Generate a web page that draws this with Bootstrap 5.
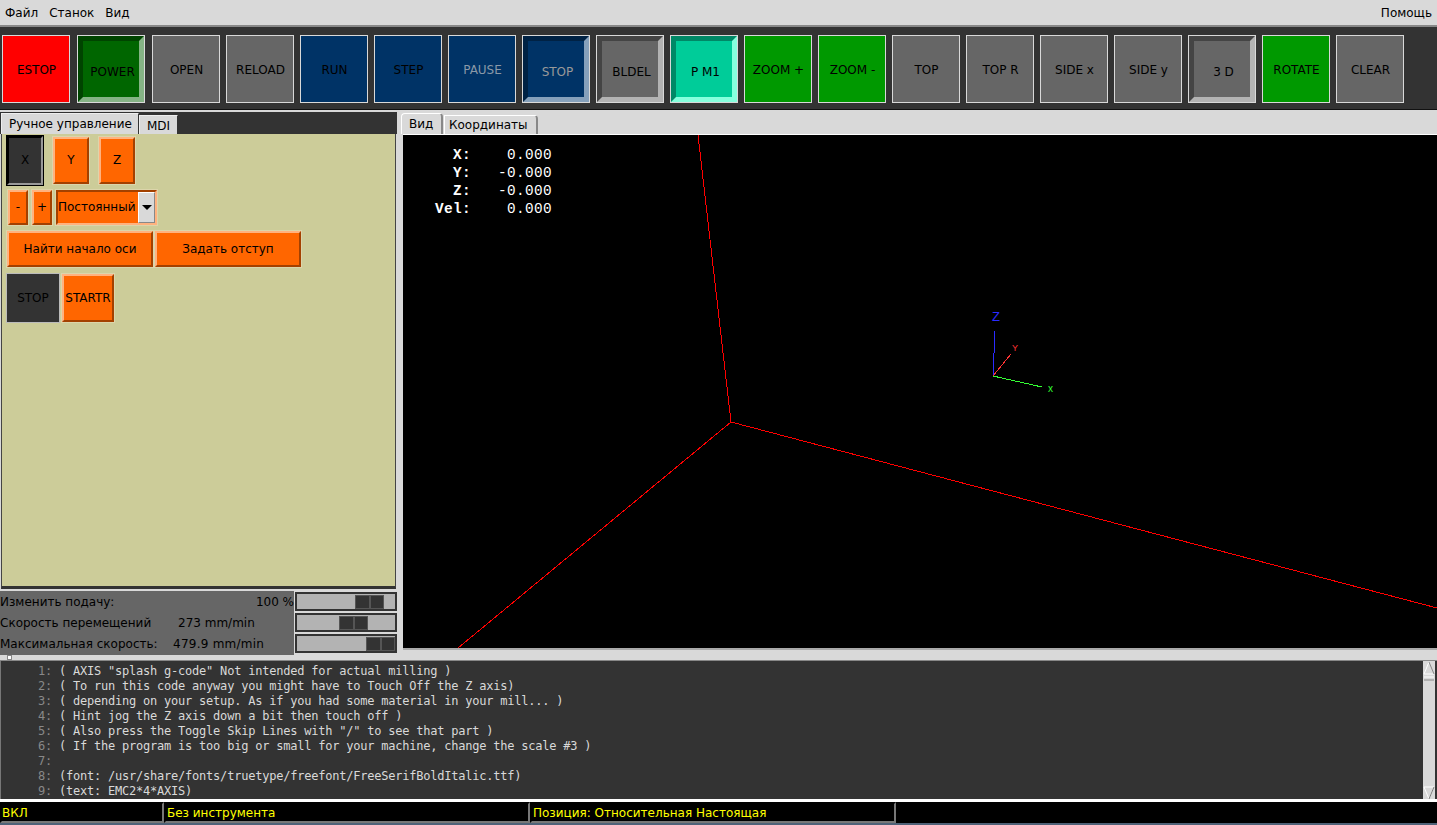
<!DOCTYPE html>
<html lang="ru"><head><meta charset="utf-8"><title>AXIS</title>
<link href="https://cdn.jsdelivr.net/npm/bootstrap@5.3.0/dist/css/bootstrap.min.css" rel="stylesheet">
<script src="https://cdn.jsdelivr.net/npm/bootstrap@5.3.0/dist/js/bootstrap.bundle.min.js"></script>
<style>
html,body{height:825px;overflow:hidden}
body{font-family:"DejaVu Sans",sans-serif;font-size:12px;line-height:15px;color:#000;background:#d9d9d9}
.menu-bar{height:25px;padding:1px 5px 0}
.menu-bar span{margin-right:11px}
.menu-bar span:last-child{margin-right:0}
.tool-bar{height:85px;background:#333;border-top:2px solid #888;border-bottom:1px solid #111;padding:8px 0 0 2px;gap:6px}
.tool{width:68px;height:68px;flex:none;border:1px solid #d9d9d9;background:#666;font-size:12px;line-height:15px;color:#000;border-radius:0;padding:2px 0 0 1px}
.tool:hover{background:#666;color:#000;border-color:#d9d9d9}
.t-red,.t-red:hover{background:#f00}
.t-navy,.t-navy:hover{background:#036}
.t-green,.t-green:hover{background:#090}
.t-gap{margin-right:1px}
.sunk{border:6px solid;outline:1px solid #d9d9d9;outline-offset:-1px;padding:6px 0 0 3px}
.s-power,.s-power:hover{background:#060;border-color:#004400 #85b385 #85b385 #004400}
.s-navy,.s-navy:hover{background:#036;border-color:#002244 #85a0bb #85a0bb #002244;color:#999}
.s-gray,.s-gray:hover{background:#666;border-color:#444 #b3b3b3 #b3b3b3 #444}
.s-teal,.s-teal:hover{background:#0c9;border-color:#008866 #85ffdd #85ffdd #008866}
.dim{color:#8a99a8}
.work{height:545px}
.left-col{width:397px;flex:none}
.tab-strip-dark{height:24px;background:#333;border-top:2px solid #d9d9d9;padding-left:1px;align-items:flex-end}
.tab-on{height:21px;background:#d9d9d9;border:1px solid #eee;border-bottom:0;border-right:1px solid #333;padding:3px 0 0 7px;width:138px;white-space:nowrap}
.tab-off{height:19px;background:#d9d9d9;border:1px solid #eee;border-bottom:0;border-right:1px solid #333;padding:3px 0 0 7px;width:39px}
.jog-box{height:455px;width:395px;margin-left:1px;background:#cccc99;border:1px solid #444;border-top:0;border-bottom:3px solid #333;padding:1px 0 0 5px}
.raise{background:#f60;border:2px solid;border-color:#ffb27f #a34100 #a34100 #ffb27f;outline:1px solid #dcd5ab;color:#000;border-radius:0;padding:0;font-size:12px;line-height:15px;flex:none}
.raise:hover{background:#f60;color:#000;border-color:#ffb27f #a34100 #a34100 #ffb27f}
.ax{width:36px;height:47px;margin-top:2px}
.ax-on,.ax-on:hover{background:#333;border-color:#000 #999 #999 #000;height:49px;margin-top:1px;outline-color:#000}
.pm{width:20px;height:35px}
.combo{width:101px;height:35px;background:#f60;border:2px solid;border-color:#a34100 #ffb27f #ffb27f #a34100;outline:1px solid #dcd5ab;flex:none}
.combo-arrow{width:17px;height:31px;background:#d9d9d9;border:1px solid;border-color:#fff #888 #888 #fff}
.tri{width:0;height:0;border-left:5px solid transparent;border-right:5px solid transparent;border-top:5px solid #000}
.wide{width:146px;height:36px}
.st{width:52px;height:48px}
.st-on,.st-on:hover{background:#333;border-color:#333;outline-color:#bbb}
.row-ax{gap:10px}
.row-jog{gap:4px;margin:5px 0 0 1px}
.row-home{gap:2px;margin-top:6px}
.row-st{gap:3px;margin-top:7px}
.feed-rows{height:64px;width:397px;margin-top:2px}
.feed-labels{width:294px;flex:none;background:#666;padding-top:4px}
.f-line{height:21px;white-space:nowrap}
.v1{width:256px}.v2{width:178px}.v3{width:173px}
.v3 + span{letter-spacing:.25px}
.feed-scales{width:102px;margin-left:1px;padding-top:1px}
.scale{height:19px;background:#b3b3b3;border:2px solid #333;margin-bottom:2px;width:102px;align-items:center}
.thumb{width:14.5px;height:14px;background:#333;border:1px solid #555;flex:none}
.m1{margin-left:58px}.m2{margin-left:42px}.m3{margin-left:69px}
.view-col{min-width:0}
.view-tabs{height:24px;padding:0 0 0 4px;align-items:flex-end}
.vt-on{height:21px;width:42px;background:#d9d9d9;border:1px solid #fff;border-bottom:0;border-right:2px solid #888;border-radius:4px 4px 0 0;padding:3px 0 0 7px}
.vt-off{height:19px;width:94px;background:#d9d9d9;border:1px solid #fff;border-bottom:0;border-right:2px solid #888;border-radius:0 4px 0 0;padding:2px 0 0 4px;margin-left:1px}
.gl-view{height:516px;margin-left:6px;background:#000;border-top:1px solid #fff;border-bottom:2px solid #aaa;position:relative;overflow:hidden}
.gl-svg{display:block;width:100%;height:100%}
.dro{position:absolute;left:32px;top:11px;color:#fff;font-family:"Liberation Mono",monospace;font-size:14.4px;letter-spacing:.36px;line-height:18px;white-space:pre}
.dro b{font-weight:700}
.sash{height:5px;position:relative}
.grip{position:absolute;left:7px;top:0;width:5px;height:5px;background:#fff;border:1px solid #888}
.log-wrap{height:139px;background:#333;border-top:1px solid #888}
.log-text{font-family:"DejaVu Sans Mono",monospace;font-size:12px;letter-spacing:-.22px;line-height:15px;color:#d9d9d9;white-space:pre;padding:3px 0 0 37px;min-width:0;border-left:1px solid #777;overflow:hidden}
.log-text i{font-style:normal;color:#888;margin-right:7px}
.bar-v{width:12px;flex:none;background:#d9d9d9;margin-right:2px}
.white-rule{height:3px;background:#fff}
.status{height:21px;background:#000;color:#ff0}
.cell{height:21px;border:2px solid;border-color:#000 #777 #777 #000;padding:2px 0 0 0;flex:none}
.c1{width:164px}.c2{width:366px;padding-left:1px}.c3{width:366px;padding-left:1px}
.foot-strip{height:2px;background:#4f6278}
</style></head><body>
<div class="menu-bar d-flex align-items-center"><span>Файл</span><span>Станок</span><span>Вид</span><span class="ms-auto">Помощь</span></div>
<div class="tool-bar d-flex">
<button class="btn tool t-red t-gap">ESTOP</button>
<button class="btn tool sunk s-power t-gap">POWER</button>
<button class="btn tool">OPEN</button>
<button class="btn tool">RELOAD</button>
<button class="btn tool t-navy">RUN</button>
<button class="btn tool t-navy">STEP</button>
<button class="btn tool t-navy"><span class="dim">PAUSE</span></button>
<button class="btn tool sunk s-navy">STOP</button>
<button class="btn tool sunk s-gray">BLDEL</button>
<button class="btn tool sunk s-teal">P M1</button>
<button class="btn tool t-green">ZOOM +</button>
<button class="btn tool t-green">ZOOM -</button>
<button class="btn tool">TOP</button>
<button class="btn tool">TOP R</button>
<button class="btn tool">SIDE x</button>
<button class="btn tool">SIDE y</button>
<button class="btn tool sunk s-gray">3 D</button>
<button class="btn tool t-green">ROTATE</button>
<button class="btn tool">CLEAR</button>
</div>
<div class="work d-flex">
<div class="left-col d-flex flex-column">
<div class="tab-strip-dark d-flex"><div class="tab-on">Ручное управление</div><div class="tab-off">MDI</div></div>
<div class="jog-box">
<div class="row-ax d-flex align-items-start"><button class="btn raise ax ax-on">X</button><button class="btn raise ax">Y</button><button class="btn raise ax">Z</button></div>
<div class="row-jog d-flex align-items-start"><button class="btn raise pm">-</button><button class="btn raise pm">+</button>
<div class="combo d-flex align-items-center justify-content-between"><span>Постоянный</span><span class="combo-arrow d-flex align-items-center justify-content-center"><span class="tri"></span></span></div></div>
<div class="row-home d-flex"><button class="btn raise wide">Найти начало оси</button><button class="btn raise wide">Задать отступ</button></div>
<div class="row-st d-flex"><button class="btn raise st st-on">STOP</button><button class="btn raise st">STARTR</button></div>
</div>
<div class="feed-rows d-flex">
<div class="feed-labels">
<div class="f-line d-flex"><span class="v1">Изменить подачу:</span><span>100 %</span></div>
<div class="f-line d-flex"><span class="v2">Скорость перемещений</span><span>273 mm/min</span></div>
<div class="f-line d-flex"><span class="v3">Максимальная скорость:</span><span>479.9 mm/min</span></div>
</div>
<div class="feed-scales">
<div class="scale d-flex"><span class="thumb m1"></span><span class="thumb"></span></div>
<div class="scale d-flex"><span class="thumb m2"></span><span class="thumb"></span></div>
<div class="scale d-flex"><span class="thumb m3"></span><span class="thumb"></span></div>
</div>
</div>
</div>
<div class="view-col flex-grow-1 d-flex flex-column">
<div class="view-tabs d-flex"><div class="vt-on">Вид</div><div class="vt-off">Координаты</div></div>
<div class="gl-view">
<svg class="gl-svg" viewBox="0 0 1034 513" preserveAspectRatio="none" fill="none">
<g stroke="#f00" shape-rendering="crispEdges"><path d="M295 0 328 287M328 287 55 513M328 287 1034 473"/></g>
<g shape-rendering="crispEdges">
<path d="M592 196 590 241" stroke="#2b2bff"/>
<path d="M590 241 608 219" stroke="#f33"/>
<path d="M590 241 639 252" stroke="#3f3"/>
</g>
<text x="589" y="186" fill="#2b2bff" font-family="Liberation Sans,sans-serif" font-size="13">Z</text>
<text x="609" y="216" fill="#f33" font-family="Liberation Sans,sans-serif" font-size="9">Y</text>
<text x="645" y="257" fill="#3f3" font-family="Liberation Sans,sans-serif" font-size="10">x</text>
</svg>
<div class="dro"><b>  X:</b>    0.000
<b>  Y:</b>   -0.000
<b>  Z:</b>   -0.000
<b>Vel:</b>    0.000</div>
</div>
</div>
</div>
<div class="sash"><span class="grip"></span></div>
<div class="log-wrap d-flex">
<div class="log-text flex-grow-1"><i>1:</i>( AXIS "splash g-code" Not intended for actual milling )
<i>2:</i>( To run this code anyway you might have to Touch Off the Z axis)
<i>3:</i>( depending on your setup. As if you had some material in your mill... )
<i>4:</i>( Hint jog the Z axis down a bit then touch off )
<i>5:</i>( Also press the Toggle Skip Lines with "/" to see that part )
<i>6:</i>( If the program is too big or small for your machine, change the scale #3 )
<i>7:</i>
<i>8:</i>(font: /usr/share/fonts/truetype/freefont/FreeSerifBoldItalic.ttf)
<i>9:</i>(text: EMC2*4*AXIS)</div>
<div class="bar-v">
<svg width="12" height="138" viewBox="0 0 12 138" class="d-block" fill="none"><path d="M6 1 1 13H11" stroke="#fff"/><path d="M6 1 11 13" stroke="#888"/><path d="M1 16H11" stroke="#fff"/><path d="M1 19H11" stroke="#888"/><path d="M1 126H11L6 138Z" stroke="#fff"/><path d="M11 126 6 138" stroke="#777"/></svg>
</div>
</div>
<div class="white-rule"></div>
<div class="status d-flex"><div class="cell c1">ВКЛ</div><div class="cell c2">Без инструмента</div><div class="cell c3">Позиция: Относительная Настоящая</div></div>
<div class="foot-strip"></div>
</body></html>
